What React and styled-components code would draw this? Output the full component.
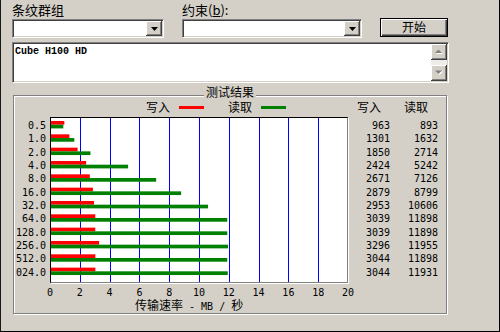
import React from 'react';
import styled, { createGlobalStyle } from 'styled-components';

const CJK = `"Noto Sans CJK SC", "Noto Sans", sans-serif`;
const MONO = `"DejaVu Sans Mono", "Liberation Mono", "Noto Sans CJK SC", monospace`;

const Global = createGlobalStyle`
  html, body { margin: 0; padding: 0; background: #d4d0c8; }
  #root { width: 500px; height: 332px; }
`;

const rows = [
  ['0.5', 963, 893],
  ['1.0', 1301, 1632],
  ['2.0', 1850, 2714],
  ['4.0', 2424, 5242],
  ['8.0', 2671, 7126],
  ['16.0', 2879, 8799],
  ['32.0', 2953, 10606],
  ['64.0', 3039, 11898],
  ['128.0', 3039, 11898],
  ['256.0', 3296, 11955],
  ['512.0', 3044, 11898],
  ['024.0', 3044, 11931],
];

const PITCH = 13.33;
const UNIT = 14.9;

const Window = styled.div`
  box-sizing: border-box;
  width: 500px;
  height: 332px;
  background: #d4d0c8;
  border-left: 1px solid #1a1a1a;
  border-right: 1px solid #000;
  border-bottom: 1px solid #000;
  padding: 2px 0 0 11px;
  display: flex;
  flex-direction: column;
  font-family: ${CJK};
  color: #000;
`;

const TopRow = styled.div`
  display: flex;
  align-items: flex-end;
  gap: 18px;
`;

const Field = styled.div`
  display: flex;
  flex-direction: column;
  width: ${p => p.$w}px;
`;

const Label = styled.div`
  font-size: 13px;
  line-height: 16px;
  height: 17px;
  white-space: nowrap;
  u { text-decoration: underline; }
`;

const Combo = styled.div`
  box-sizing: border-box;
  height: 19px;
  background: #fff;
  border-style: solid;
  border-width: 1px;
  border-color: #808080 #fff #fff #808080;
  box-shadow: inset 1px 1px 0 #404040, inset -1px -1px 0 #d4d0c8;
  padding: 1px;
  display: flex;
  justify-content: flex-end;
`;

const DropButton = styled.div`
  width: 16px;
  height: 15px;
  box-sizing: border-box;
  background: #d4d0c8;
  box-shadow: inset -1px -1px 0 #404040, inset 1px 1px 0 #fff, inset -2px -2px 0 #808080;
  display: flex;
  align-items: center;
  justify-content: center;
`;

const PushButton = styled.div`
  box-sizing: border-box;
  width: 68px;
  height: 19px;
  margin-bottom: 1px;
  border: 1px solid #000;
  background: #d4d0c8;
  box-shadow: inset 1px 1px 0 #fff, inset -1px -1px 0 #404040, inset -2px -2px 0 #808080;
  font-size: 12px;
  line-height: 16px;
  text-align: center;
`;

const TextBox = styled.div`
  box-sizing: border-box;
  margin-top: 4px;
  width: 437px;
  height: 41px;
  background: #fff;
  border-style: solid;
  border-width: 1px;
  border-color: #808080 #fff #fff #808080;
  box-shadow: inset 1px 1px 0 #404040, inset -1px -1px 0 #d4d0c8;
  padding: 1px;
  display: flex;
`;

const TextContent = styled.div`
  flex: 1;
  font-family: "Liberation Mono", monospace;
  font-weight: bold;
  font-size: 10px;
  line-height: 12px;
  padding: 2px 0 0 1px;
`;

const ScrollBar = styled.div`
  width: 16px;
  display: flex;
  flex-direction: column;
  background: #eeece8;
`;

const ScrollBtn = styled.div`
  width: 16px;
  height: 16px;
  box-sizing: border-box;
  background: #d4d0c8;
  box-shadow: inset -1px -1px 0 #404040, inset 1px 1px 0 #fff, inset -2px -2px 0 #808080;
  display: flex;
  align-items: center;
  justify-content: center;
`;

const Track = styled.div`
  flex: 1;
`;

const GroupBox = styled.div`
  box-sizing: border-box;
  margin: 12px 0 0 1px;
  width: 434px;
  height: 219px;
  border: 1px solid #808080;
  box-shadow: 1px 1px 0 #fff, inset 1px 1px 0 #fff;
  display: flex;
  flex-direction: column;
`;

const GroupTitle = styled.div`
  margin-top: -10px;
  text-align: center;
  font-size: 12px;
  line-height: 12px;
  height: 12px;
  span {
    background: #d4d0c8;
    padding: 0 2px;
  }
`;

const ChartGrid = styled.div`
  margin-top: 2px;
  display: grid;
  grid-template-columns: 36px 298px 42px 48px;
  grid-template-rows: 14px auto auto auto;
`;

const Legend = styled.div`
  grid-column: 2;
  padding-left: 96px;
  display: flex;
  align-items: center;
  font-size: 12px;
  line-height: 14px;
`;

const LegendText = styled.span`
  width: 24px;
  white-space: nowrap;
`;

const LegendLine = styled.span`
  width: 25px;
  height: 3px;
  margin: 1px 24px 0 9px;
  background: ${p => p.$c};
`;

const Header = styled.div`
  padding-left: ${p => p.$pl}px;
  font-size: 12px;
  line-height: 14px;
  white-space: nowrap;
`;

const RowList = styled.div`
  margin-top: 3px;
  padding-top: 2.1px;
  display: flex;
  flex-direction: column;
  align-items: flex-end;
  padding-right: ${p => p.$pr || 0}px;
`;

const RowText = styled.div`
  height: ${PITCH}px;
  font-family: ${MONO};
  font-size: 10px;
  line-height: ${PITCH}px;
  white-space: nowrap;
`;

const Plot = styled.div`
  margin-top: 3px;
  box-sizing: border-box;
  width: 298px;
  height: 166px;
  background: #fff;
  border-style: solid;
  border-width: 1px;
  border-color: #000 #808080 #808080 #000;
  box-shadow: 1px 1px 0 #fff;
  svg { display: block; }
`;

const Ticks = styled.div`
  grid-column: 2;
  margin-top: 5px;
  display: flex;
  justify-content: space-between;
  font-family: ${MONO};
  font-size: 10px;
  line-height: 10px;
  height: 10px;
`;

const Tick = styled.span`
  width: 0;
  display: flex;
  justify-content: center;
  white-space: nowrap;
`;

const AxisTitle = styled.div`
  grid-column: 2 / span 2;
  margin-top: 1px;
  padding-left: 85px;
  font-size: 12px;
  line-height: 12px;
  white-space: pre;
`;

const Ascii = styled.span`
  font-family: ${MONO};
  font-size: 10px;
`;

const DownTri = () => (
  <svg width="7" height="4" viewBox="0 0 7 4">
    <polygon points="0,0 7,0 3.5,4" fill="#000" />
  </svg>
);

const GrayArrow = ({ up }) => (
  <svg width="9" height="6" viewBox="0 0 9 6">
    {up ? (
      <>
        <polygon points="1,5 8,5 4.5,1.5" fill="#fff" />
        <polygon points="0,4 7,4 3.5,0.5" fill="#808080" />
      </>
    ) : (
      <>
        <polygon points="1,1.5 8,1.5 4.5,5" fill="#fff" />
        <polygon points="0,0.5 7,0.5 3.5,4" fill="#808080" />
      </>
    )}
  </svg>
);

const ChartSvg = () => {
  const w = 296;
  const h = 164;
  const grid = [];
  for (let k = 1; k <= 9; k++) {
    const x = Math.round(50 + 29.8 * k) - 51 + 0.5;
    grid.push(
      <line key={k} x1={x} x2={x} y1={0} y2={h} stroke="#0000ff" strokeWidth="1" shapeRendering="crispEdges" />
    );
  }
  const bars = rows.map(([, wr, rd], i) => {
    const y = 3 + PITCH * i;
    const bh = 3.7;
    return (
      <g key={i}>
        <rect x="0" y={y} width={Math.max(0, (wr / 1000) * UNIT - 1)} height={bh} fill="#ff0000" />
        <rect x="0" y={y + bh} width={Math.max(0, (rd / 1000) * UNIT - 1)} height={bh} fill="#008000" />
      </g>
    );
  });
  return (
    <svg width={w} height={h} viewBox={`0 0 ${w} ${h}`}>
      {grid}
      {bars}
    </svg>
  );
};

export default function App() {
  return (
    <>
      <Global />
      <Window>
        <TopRow>
          <Field $w={152}>
            <Label>条纹群组</Label>
            <Combo><DropButton><DownTri /></DropButton></Combo>
          </Field>
          <Field $w={180}>
            <Label>约束(<u>b</u>):</Label>
            <Combo><DropButton><DownTri /></DropButton></Combo>
          </Field>
          <PushButton>开始</PushButton>
        </TopRow>
        <TextBox>
          <TextContent>Cube H100 HD</TextContent>
          <ScrollBar>
            <ScrollBtn><GrayArrow up /></ScrollBtn>
            <Track />
            <ScrollBtn><GrayArrow /></ScrollBtn>
          </ScrollBar>
        </TextBox>
        <GroupBox>
          <GroupTitle><span>测试结果</span></GroupTitle>
          <ChartGrid>
            <Legend>
              <LegendText>写入</LegendText>
              <LegendLine $c="#ff0000" />
              <LegendText>读取</LegendText>
              <LegendLine $c="#008000" />
            </Legend>
            <Header $pl={9}>写入</Header>
            <Header $pl={14}>读取</Header>

            <RowList $pr={4}>
              {rows.map(r => <RowText key={r[0]}>{r[0]}</RowText>)}
            </RowList>
            <Plot><ChartSvg /></Plot>
            <RowList>
              {rows.map((r, i) => <RowText key={i}>{r[1]}</RowText>)}
            </RowList>
            <RowList>
              {rows.map((r, i) => <RowText key={i}>{r[2]}</RowText>)}
            </RowList>

            <Ticks>
              {[0, 2, 4, 6, 8, 10, 12, 14, 16, 18, 20].map(t => <Tick key={t}>{t}</Tick>)}
            </Ticks>
            <AxisTitle>传输速率<Ascii> - MB / </Ascii>秒</AxisTitle>
          </ChartGrid>
        </GroupBox>
      </Window>
    </>
  );
}
